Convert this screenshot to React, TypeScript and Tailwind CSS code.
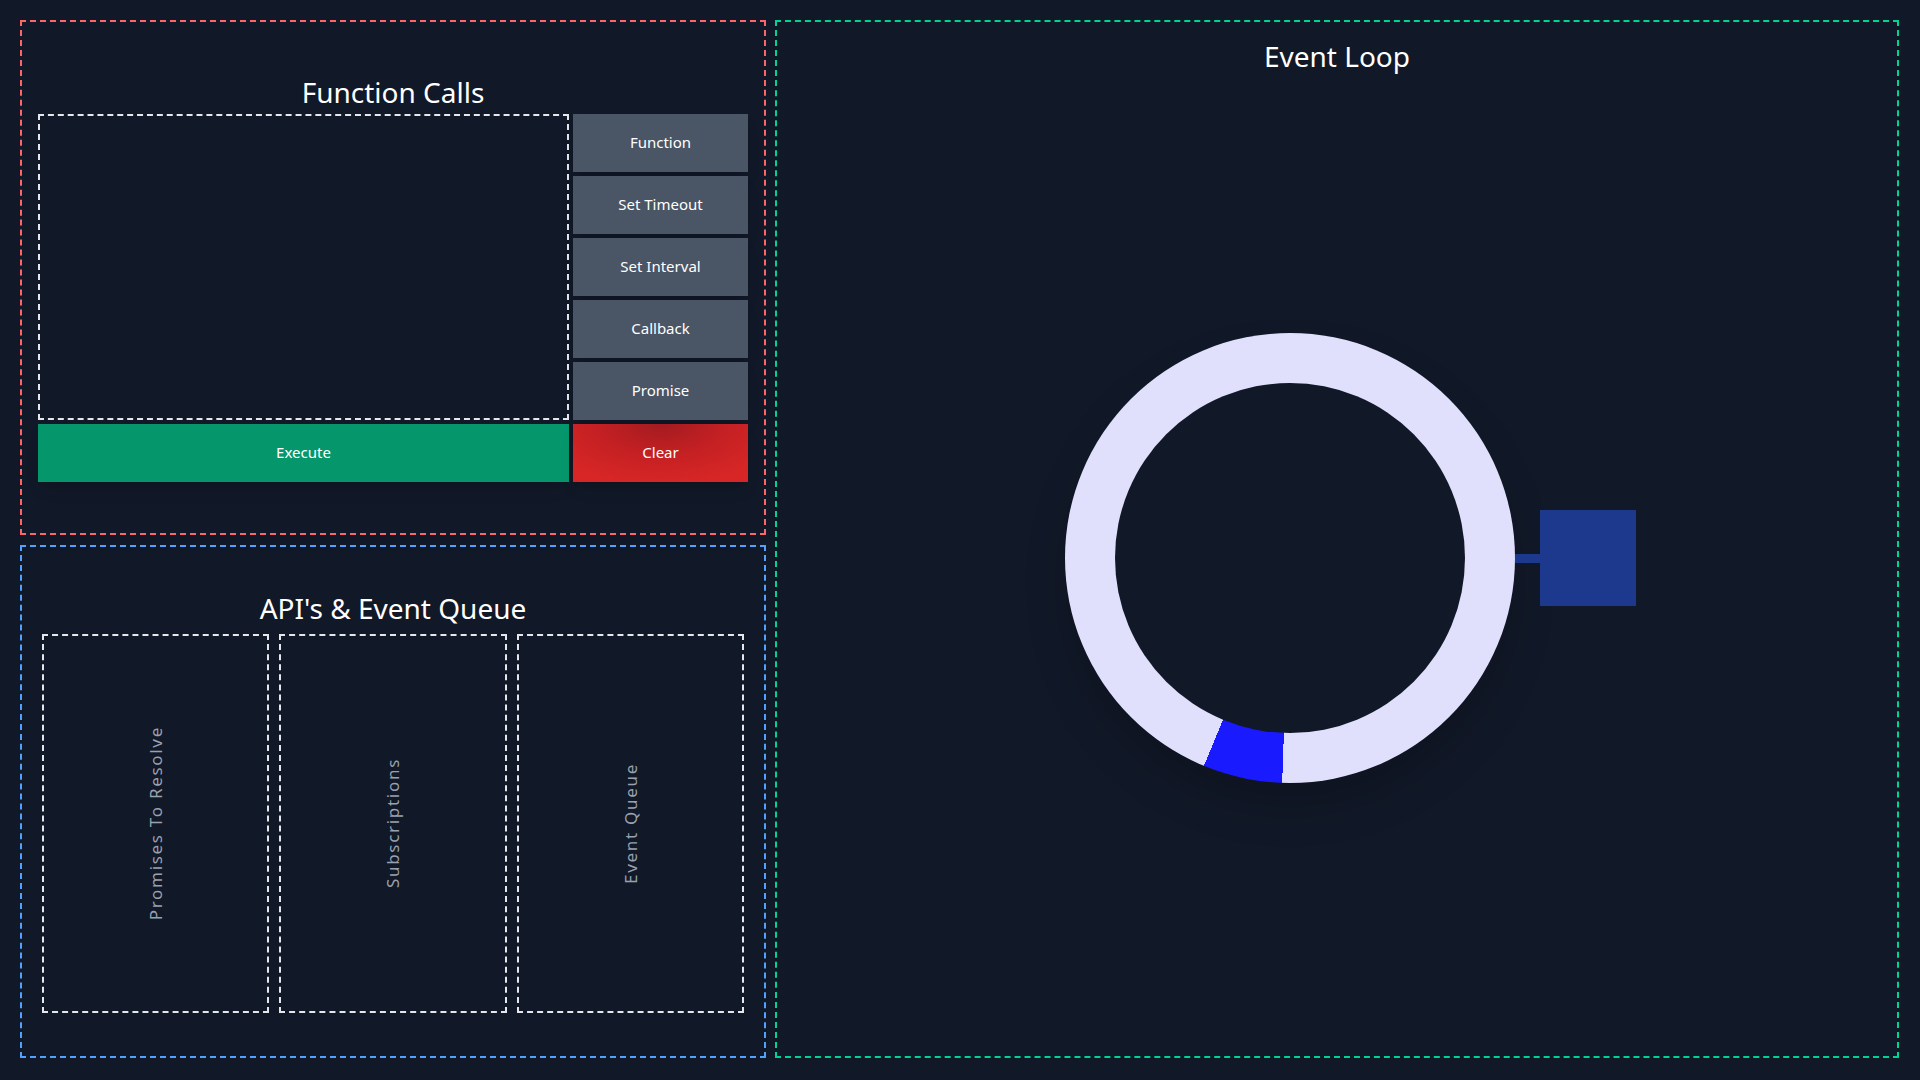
const font = { fontFamily: '"Noto Sans", "DejaVu Sans", sans-serif' };

const actions = ['Function', 'Set Timeout', 'Set Interval', 'Callback', 'Promise'];
const queues = ['Promises To Resolve', 'Subscriptions', 'Event Queue'];

function ActionButton({ label }: { label: string }) {
  return (
    <button className="h-[58px] bg-gray-600 text-[15px] text-white shadow-lg">{label}</button>
  );
}

export default function App() {
  return (
    <div
      className="flex h-[1080px] w-full gap-[9px] bg-[#111827] pt-5 pl-5 pr-[21px] pb-[22px]"
      style={font}
    >
      {/* left column */}
      <div className="flex w-[746px] flex-col gap-[10px]">
        {/* Function Calls */}
        <section className="flex h-[515px] flex-col justify-center border-2 border-dashed border-red-400 px-4">
          <h2 className="mb-1 text-center text-[28px] leading-9 text-white">Function Calls</h2>
          <div className="grid grid-cols-[1fr_175px] gap-1">
            <div className="row-span-5 border-2 border-dashed border-gray-200" />
            {actions.map((a) => (
              <ActionButton key={a} label={a} />
            ))}
            <button className="h-[58px] bg-[#05976b] text-[15px] text-white shadow-lg">Execute</button>
            <button className="h-[58px] bg-[radial-gradient(ellipse_90%_130%_at_50%_0%,#a31b20_0%,#c42023_40%,#d82626_80%)] text-[15px] text-white shadow-lg">
              Clear
            </button>
          </div>
        </section>

        {/* API's & Event Queue */}
        <section className="flex flex-1 flex-col justify-center border-2 border-dashed border-blue-400 px-5">
          <h2 className="mb-2 text-center text-[28px] leading-9 text-white">API's &amp; Event Queue</h2>
          <div className="flex gap-[10px]">
            {queues.map((q) => (
              <div
                key={q}
                className="flex h-[379px] flex-1 items-center justify-center border-2 border-dashed border-gray-200"
              >
                <span className="rotate-180 text-[17px] tracking-[0.1em] text-gray-400 [writing-mode:vertical-rl]">
                  {q}
                </span>
              </div>
            ))}
          </div>
        </section>
      </div>

      {/* Event Loop */}
      <section className="flex flex-1 flex-col border-2 border-dashed border-emerald-400 pt-4 pb-[14px]">
        <h2 className="text-center text-[28px] leading-9 text-white">Event Loop</h2>
        <div className="flex flex-1 items-center justify-center pl-[27px]">
          <div className="flex h-[450px] w-[450px] items-center justify-center rounded-full bg-[conic-gradient(#e0e0fc_0deg_182deg,#1a1aff_182deg_202.5deg,#e0e0fc_202.5deg)] shadow-2xl">
            <div className="h-[350px] w-[350px] rounded-full bg-[#111827]" />
          </div>
          <div className="h-[9px] w-[25px] bg-blue-900" />
          <div className="h-[96px] w-[96px] bg-blue-900" />
        </div>
      </section>
    </div>
  );
}
